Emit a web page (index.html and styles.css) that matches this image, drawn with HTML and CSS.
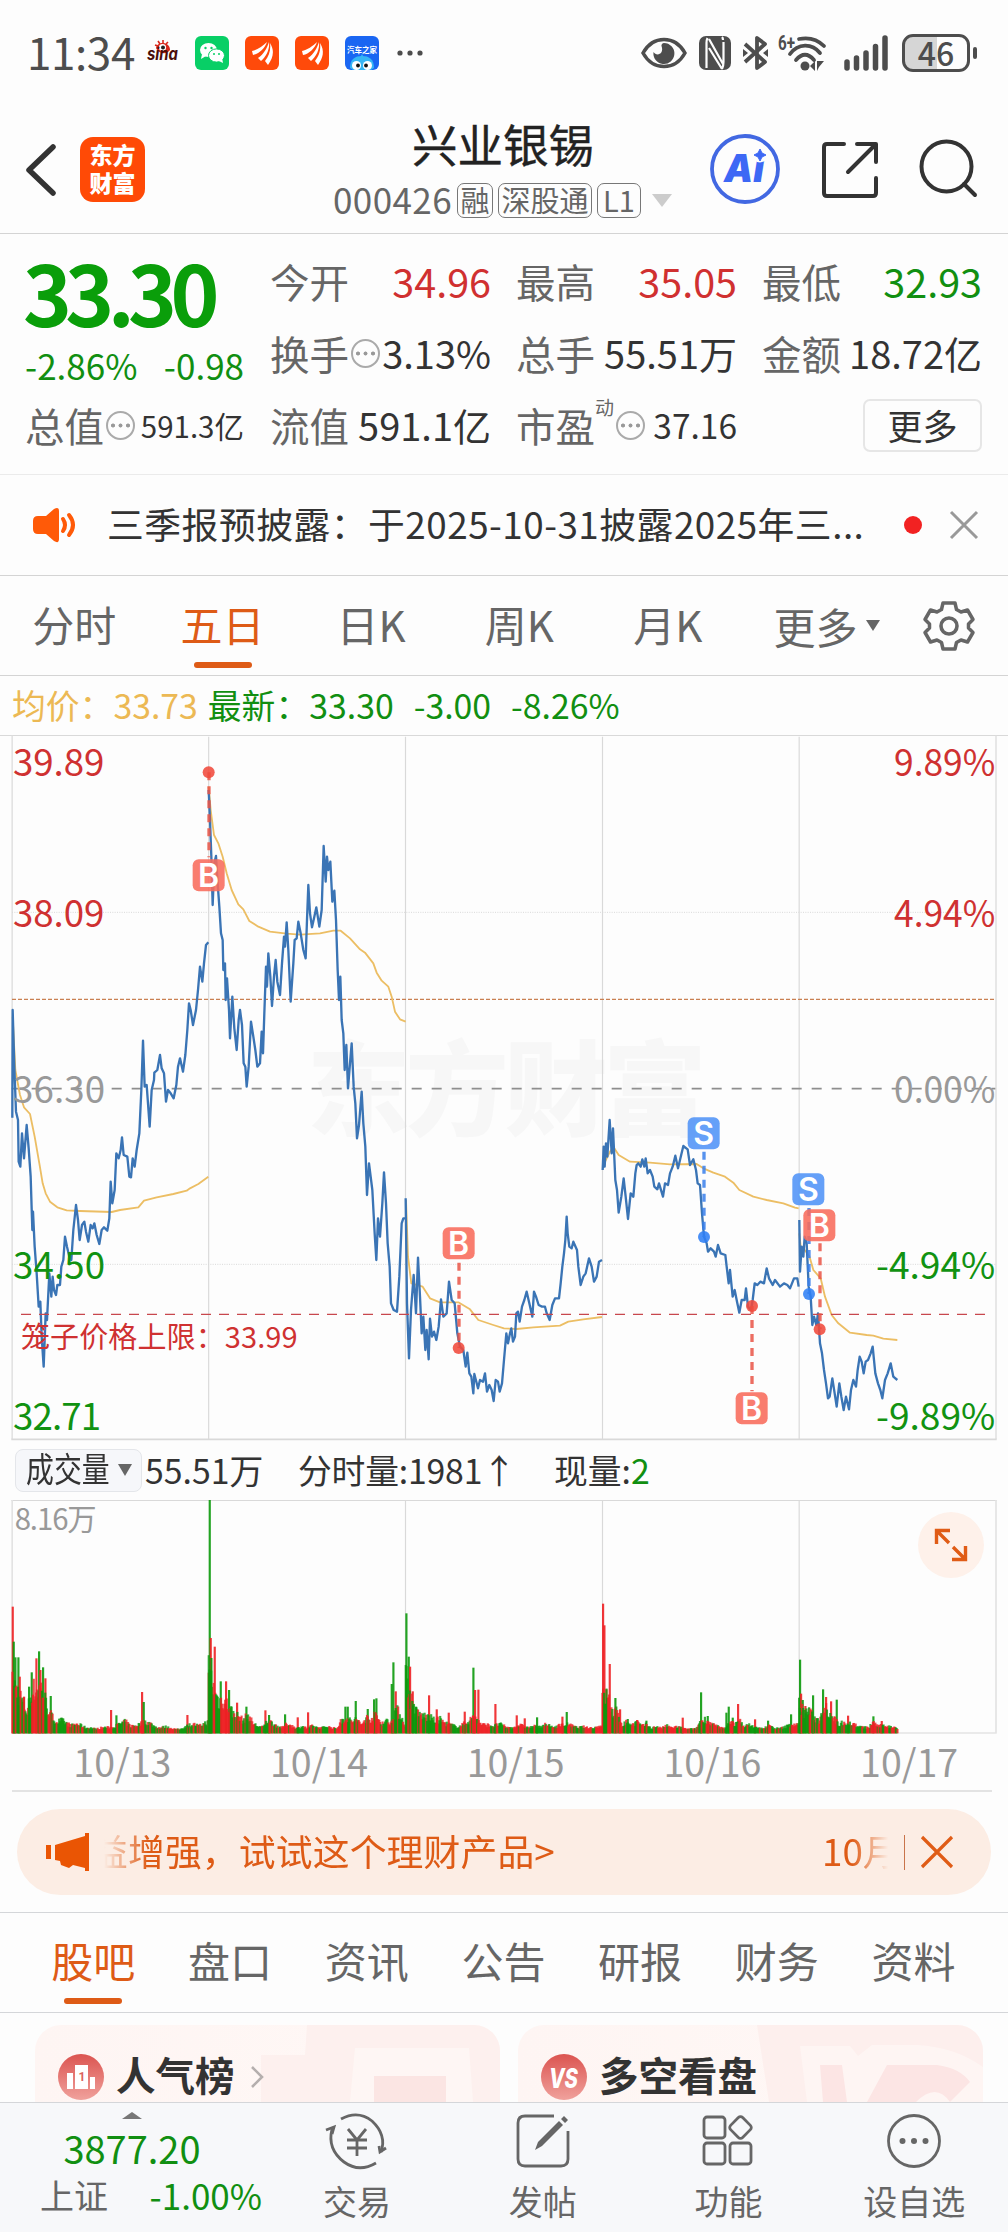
FILE: index.html
```html
<!DOCTYPE html>
<html lang="zh-CN">
<head>
<meta charset="utf-8">
<title>兴业银锡 000426</title>
<link rel="stylesheet" href="styles.css">
</head>
<body>
<div class="phone">

<header class="status">
  <span class="clock">11:34</span>
  <svg class="sina" width="32" height="26" viewBox="0 0 32 26"><path d="M9 8C10 1 23 1 23 10c-2 4-11 5-14-2z" fill="#d8281c"/><path d="M8 5l3 1M11 1l2 3M16 0v3M21 2l-2 2" stroke="#d8281c" stroke-width="1.6"/><circle cx="15.500" cy="7.500" r="3.600" fill="#fff"/><circle cx="16" cy="7.500" r="2" fill="#222"/><text x="0" y="20" class="sina-text" textLength="31" lengthAdjust="spacingAndGlyphs">sina</text></svg>
  <svg class="app" width="34" height="34" viewBox="0 0 34 34"><rect width="34" height="34" rx="6" fill="#08cf66"/><ellipse cx="13.500" cy="14" rx="8.500" ry="7" fill="#fff"/><path d="M7 18l-1 5 5-3z" fill="#fff"/><ellipse cx="21.500" cy="19.500" rx="8" ry="6.600" fill="#fff" stroke="#08cf66"/><path d="M24 25l4 2-1-5z" fill="#fff"/><g fill="#08cf66"><circle cx="10.500" cy="12" r="1.200"/><circle cx="16.500" cy="12" r="1.200"/><circle cx="19" cy="18" r="1"/><circle cx="24" cy="18" r="1"/></g></svg>
  <svg class="app" width="34" height="34" viewBox="0 0 34 34"><rect width="34" height="34" rx="6" fill="#ff4a0a"/><path d="M7 15C12 14 18 10 22 6 20 12 14 18 8 19zM13 22C19 18 22 12 24 6c1 7-3 15-8 19zM20 25c4-5 6-11 5-18 5 8 3 15-2 22z" fill="#fff"/></svg>
  <svg class="app" width="34" height="34" viewBox="0 0 34 34"><rect width="34" height="34" rx="6" fill="#ff4a0a"/><path d="M7 15C12 14 18 10 22 6 20 12 14 18 8 19zM13 22C19 18 22 12 24 6c1 7-3 15-8 19zM20 25c4-5 6-11 5-18 5 8 3 15-2 22z" fill="#fff"/></svg>
  <svg class="app" width="34" height="34" viewBox="0 0 34 34"><rect width="34" height="34" rx="6" fill="#1a66f2"/><path d="M5 32C5 23 10 20 17 20s12 3 12 12l-3 2H8z" fill="#36b6f5"/><path d="M17 18l2 4h-4z" fill="#36b6f5"/><circle cx="11.500" cy="29.500" r="4.500" fill="#fff"/><circle cx="22.500" cy="29.500" r="4.500" fill="#fff"/><circle cx="13" cy="29.500" r="1.900" fill="#111"/><circle cx="21" cy="29.500" r="1.900" fill="#111"/><text x="2" y="17" class="auto-text" textLength="30" lengthAdjust="spacingAndGlyphs">汽车之家</text></svg>
  <svg class="more-dots" width="26" height="6" viewBox="0 0 26 6" fill="#4d4d4d"><circle cx="3" cy="3" r="2.600"/><circle cx="13" cy="3" r="2.600"/><circle cx="23" cy="3" r="2.600"/></svg>
  <div class="signals">
    <svg width="46" height="32" viewBox="0 0 46 32"><path d="M2 16C12-2 34-2 44 16 34 34 12 34 2 16z" fill="none" stroke="#4d4d4d" stroke-width="3.500"/><path d="M23 6a10.500 10.500 0 1 1-10.500 9c3 5 11 2 8-6-.4-1.200 1-3 2.500-3z" fill="#4d4d4d"/></svg>
    <svg class="nfc" width="32" height="34" viewBox="0 0 32 34"><rect width="32" height="34" rx="7" fill="#4d4d4d"/><path d="M8.500 2q-1 2-1 5v25M10 3l14 25M10 12l13 21M24 4q0-2-1-3M24.500 6v20q0 4-1.500 7" stroke="#fdfdfd" stroke-width="2.200" fill="none"/></svg>
    <svg class="bt" width="26" height="36" viewBox="0 0 26 36"><path d="M2 27L22 9 14 3v30l8-6L2 9" fill="none" stroke="#4d4d4d" stroke-width="3.800" stroke-linejoin="round"/><path d="M0 14l5 4-5 4zM25 14l-5 4 5 4z" fill="#4d4d4d"/></svg>
    <svg class="wifi" width="50" height="38" viewBox="0 0 50 38"><text x="0" y="16" class="wifi-text" textLength="17" lengthAdjust="spacingAndGlyphs">6+</text><g fill="none" stroke="#4d4d4d" stroke-width="3.800" stroke-linecap="round"><path d="M21 5C31 3 40 6 46 12M12 20C20 9 34 9 42 19M18 26c6-7 12-7 18 0"/></g><circle cx="27" cy="32" r="4.500" fill="#4d4d4d"/><path d="M32 32l5-5v10zM39 37V27h7l-5 6z" fill="#4d4d4d"/></svg>
    <svg class="bars" width="44" height="36" viewBox="0 0 44 36"><path d="M3 27v6M12.500 23v10M22 18v15M31.500 11.500V33M41 3v30" stroke="#4d4d4d" stroke-width="5.500" stroke-linecap="round"/></svg>
    <span class="battery">46</span><i class="battery-cap"></i>
  </div>
</header>

<nav class="titlebar">
  <svg class="back" width="34" height="56" viewBox="0 0 34 56"><path d="M29 5L5 28l24 23" fill="none" stroke="#333" stroke-width="5.500" stroke-linecap="round" stroke-linejoin="round"/></svg>
  <div class="brand"><b>东方</b><b>财富</b></div>
  <div class="name">
    <h1>兴业银锡</h1>
    <p><span class="code">000426</span><span class="tag">融</span><span class="tag">深股通</span><span class="tag l1">L1</span><i class="tri"></i></p>
  </div>
  <svg class="ai" width="70" height="70" viewBox="0 0 70 70"><circle cx="35" cy="35" r="33" fill="none" stroke="#4268e2" stroke-width="3.800"/><text x="14" y="48" class="ai-text" textLength="40" lengthAdjust="spacingAndGlyphs">Ai</text><circle cx="50" cy="21" r="7.500" fill="#fdfdfd"/><path d="M50 15l2 4 4 2-4 2-2 4-2-4-4-2 4-2z" fill="#3d68f5" stroke="#3d68f5"/></svg>
  <svg class="share" width="58" height="58" viewBox="0 0 58 58"><g fill="none" stroke="#333" stroke-width="4" stroke-linecap="round" stroke-linejoin="round"><path d="M23 3H6Q3 3 3 6v46q0 3 3 3h46q3 0 3-3V37M36 3h19v18M54 4L27 31"/></g></svg>
  <svg class="search" width="60" height="60" viewBox="0 0 60 60"><g fill="none" stroke="#333" stroke-width="4" stroke-linecap="round"><circle cx="27.500" cy="27.500" r="25"/><path d="M45 45l11 11"/></g></svg>
</nav>

<section class="quote">
  <div class="last">
    <div class="price">33.30</div>
    <div class="chg"><span>-2.86%</span><span>-0.98</span></div>
    <div class="kv small"><span>总值</span><i class="tip"></i><b>591.3亿</b></div>
  </div>
  <div class="stats">
    <div class="kv"><span>今开</span><b class="up">34.96</b></div>
    <div class="kv"><span>最高</span><b class="up">35.05</b></div>
    <div class="kv"><span>最低</span><b class="down">32.93</b></div>
    <div class="kv mid"><span>换手</span><i class="tip"></i><b>3.13%</b></div>
    <div class="kv mid"><span>总手</span><b>55.51万</b></div>
    <div class="kv mid"><span>金额</span><b>18.72亿</b></div>
    <div class="kv mid"><span>流值</span><b>591.1亿</b></div>
    <div class="kv pe"><span>市盈</span><sup>动</sup><i class="tip"></i><b>37.16</b></div>
    <div class="kv end"><button class="more">更多</button></div>
  </div>
</section>

<section class="notice">
  <svg width="44" height="36" viewBox="0 0 44 36"><path d="M6 9h8L22 2q5-3 5 2v28q0 5-5 2l-8-7H6q-5 0-5-5v-8q0-5 5-5z" fill="#ff5a08"/><path d="M31 12q4 6 0 12M37 8q8 10 0 20" fill="none" stroke="#ff5a08" stroke-width="4" stroke-linecap="round"/></svg>
  <p>三季报预披露：于2025-10-31披露2025年三...</p>
  <i class="dot"></i>
  <svg class="close" width="30" height="30" viewBox="0 0 30 30"><path d="M2 2l26 26M28 2L2 28" stroke="#999" stroke-width="3"/></svg>
</section>

<nav class="periods">
  <a>分时</a><a class="on">五日</a><a>日K</a><a>周K</a><a>月K</a><a class="wide">更多<i></i></a>
  <svg width="50" height="50" viewBox="-25 -25 50 50"><path d="M-6-23H6L7.500-16.500 12-14 18.500-16 24-6.500 19.500-2V2L24 6.500 18.500 16 12 14 7.500 16.500 6 23H-6L-7.500 16.500-12 14-18.500 16-24 6.500-19.500 2V-2L-24-6.500-18.500-16-12-14-7.500-16.500z" fill="none" stroke="#666" stroke-width="3.500" stroke-linejoin="round"/><circle r="8" fill="none" stroke="#666" stroke-width="3.600"/></svg>
</nav>

<div class="legend"><span class="avg">均价：</span><span class="avg v1">33.73</span><span>最新：</span><span class="v2">33.30</span><span class="v3">-3.00</span><span>-8.26%</span></div>

<svg class="chart" width="1008" height="705" viewBox="0 495 3024 2115">
  <text class="mark" x="920" y="1674" textLength="1200">东方财富</text>
  <g stroke="#d9d9d9" fill="none">
    <path d="M0 496.500H3024" stroke-width="3"/>
    <path d="M626 500V2608M1216.500 500V2608M1807.500 500V2608M2397.500 500V2608" stroke-width="3.500"/>
    <path d="M36.500 497V2608M2988 497V2608" stroke="#e3e3e3" stroke-width="5"/>
    <path d="M34 2608H2990" stroke-width="5"/>
    <path d="M36 1027H2986M36 2083H2986" stroke-width="3" stroke-dasharray="3 4"/>
  </g>
  <path d="M36 1288H2986" stroke="#c98052" stroke-width="3.500" stroke-dasharray="12 6"/>
  <path d="M35 1556H2986" stroke="#8e8e8e" stroke-width="5" stroke-dasharray="30 30"/>
  <g class="avg-line">
    <polyline points="38,1340 46,1500 60,1575 72,1612 90,1632 104,1700 118,1780 128,1840 137,1870 150,1895 172,1912 200,1921 240,1923 335,1926 360,1920 415,1912 432,1892 470,1882 520,1872 560,1862 570,1855 595,1842 625,1820"/>
    <polyline points="626,650 632,720 642,795 655,820 668,860 680,910 695,960 715,1003 730,1018 748,1053 775,1070 810,1085 860,1091 900,1094 960,1090 1000,1082 1022,1082 1050,1105 1080,1138 1095,1148 1120,1180 1130,1208 1145,1232 1165,1250 1175,1280 1185,1325 1200,1348 1217,1355"/>
    <polyline points="1218,1890 1224,2060 1234,2140 1268,2150 1290,2185 1320,2197 1375,2197 1410,2218 1435,2250 1480,2265 1512,2275 1550,2277 1600,2272 1680,2267 1705,2255 1750,2248 1806,2241"/>
    <polyline points="1808,1790 1830,1745 1840,1730 1856,1755 1890,1775 1950,1778 2010,1783 2090,1782 2110,1795 2140,1808 2175,1820 2200,1838 2218,1860 2260,1880 2300,1890 2350,1900 2385,1913 2396,1915"/>
    <polyline points="2398,1990 2402,2030 2414,2040 2428,2058 2440,2100 2462,2125 2475,2180 2495,2235 2515,2260 2550,2288 2600,2295 2620,2297 2650,2306 2692,2310"/>
  </g>
  <g class="price-line">
    <polyline points="37,1643 38,1320 43,1490 48,1625 54,1650 56,1775 61,1790 66,1690 72,1765 80,1665 86,1735 92,1820 97,1980 99,1925 104,2030 110,2110 116,2210 121,2195 125,2300 131,2390 137,2230 141,2250 148,2110 154,2180 158,2120 162,2160 168,2175 172,2145 180,2145 184,2090 190,2070 195,2000 201,2030 208,2060 214,2070 220,1980 228,1905 234,1950 239,2010 246,1965 253,1955 258,1985 265,2015 272,1965 278,1975 283,1960 290,1995 298,2022 305,1980 312,1972 322,1982 328,1945 332,1835 337,1900 344,1860 349,1750 356,1765 362,1740 366,1702 371,1755 382,1760 388,1820 393,1822 398,1765 404,1790 410,1740 418,1690 424,1560 429,1412 434,1550 440,1545 449,1670 455,1560 462,1530 463,1508 472,1500 480,1455 485,1495 492,1510 498,1595 504,1560 512,1570 521,1585 529,1545 534,1490 540,1465 549,1505 556,1455 562,1380 567,1300 572,1320 579,1365 588,1320 594,1260 600,1190 607,1235 612,1180 618,1125 625,1117"/>
    <polyline points="626,660 630,750 634,860 638,1005 643,880 648,858 653,940 658,1010 663,1090 668,1110 670,1200 675,1180 677,1290 681,1225 687,1320 690,1405 697,1280 703,1375 710,1440 716,1350 720,1320 726,1365 731,1480 736,1490 740,1550 746,1490 753,1355 760,1400 766,1440 772,1490 780,1480 785,1385 789,1450 793,1330 798,1190 801,1250 805,1150 811,1220 816,1308 822,1220 827,1170 832,1235 840,1275 846,1180 852,1100 855,1130 860,1057 865,1140 872,1295 880,1180 884,1110 890,1105 895,1055 902,1090 910,1140 917,1165 921,1050 925,945 930,1030 936,1072 943,1040 949,1012 958,1070 965,1020 971,828 977,935 981,860 985,900 991,875 997,995 1003,962 1008,1050 1013,1200 1017,1290 1021,1220 1025,1350 1030,1390 1034,1500 1039,1425 1044,1555 1050,1480 1055,1420 1061,1550 1066,1600 1071,1705 1077,1665 1085,1565 1090,1660 1096,1730 1101,1875 1107,1780 1117,1860 1124,1990 1129,2070 1134,1945 1140,2000 1147,1900 1152,1807 1158,1900 1163,2020 1169,2090 1173,2200 1181,2220 1191,2225 1198,2120 1205,1960 1210,1945 1216,1945"/>
    <polyline points="1217,1885 1221,2200 1227,2365 1233,2220 1241,2115 1248,2230 1254,2063 1260,2180 1265,2290 1270,2240 1276,2340 1280,2280 1286,2368 1290,2246 1296,2300 1302,2285 1309,2310 1316,2270 1323,2188 1330,2240 1340,2230 1347,2135 1355,2190 1364,2200 1372,2290 1380,2330 1390,2340 1397,2390 1402,2348 1408,2410 1414,2420 1420,2470 1423,2412 1434,2455 1440,2430 1449,2435 1455,2410 1461,2465 1468,2445 1475,2460 1481,2493 1487,2430 1494,2435 1499,2465 1506,2440 1512,2370 1519,2290 1524,2320 1530,2290 1534,2275 1539,2315 1545,2300 1549,2230 1554,2225 1559,2255 1566,2210 1573,2190 1580,2165 1588,2200 1597,2240 1602,2165 1608,2180 1616,2205 1626,2210 1635,2210 1640,2230 1649,2250 1657,2205 1665,2185 1677,2185 1682,2140 1687,2090 1692,2050 1696,2010 1700,1940 1703,1990 1708,2030 1715,2035 1720,2015 1731,2040 1735,2090 1742,2145 1750,2120 1757,2110 1767,2065 1775,2090 1782,2135 1790,2120 1797,2075 1806,2070"/>
    <polyline points="1808,1800 1811,1730 1814,1790 1818,1720 1822,1760 1829,1650 1835,1750 1839,1675 1846,1830 1851,1860 1856,1928 1864,1880 1871,1825 1877,1880 1884,1947 1892,1870 1900,1880 1906,1810 1910,1785 1915,1780 1922,1790 1927,1768 1933,1790 1937,1765 1943,1810 1950,1800 1958,1820 1963,1850 1972,1858 1977,1840 1989,1880 1995,1840 2004,1845 2010,1810 2018,1790 2026,1757 2034,1795 2040,1770 2050,1728 2063,1738 2070,1785 2080,1768 2088,1800 2093,1840 2100,1845 2106,1930 2112,2000 2120,2020 2124,2045 2132,2035 2142,2045 2147,2060 2154,2025 2162,2050 2176,2055 2180,2090 2186,2140 2190,2100 2198,2180 2204,2160 2212,2200 2218,2228 2225,2190 2234,2190 2238,2155 2244,2210 2253,2220 2258,2190 2264,2140 2272,2145 2281,2135 2292,2140 2300,2095 2307,2125 2318,2145 2325,2130 2340,2150 2352,2140 2362,2145 2370,2155 2382,2125 2392,2125 2396,2150"/>
    <polyline points="2398,1950 2400,2105 2405,2030 2410,2060 2414,2000 2420,2020 2426,2150 2432,2180 2437,2265 2442,2240 2449,2265 2454,2230 2460,2320 2466,2350 2472,2400 2478,2440 2484,2485 2489,2480 2497,2425 2504,2470 2510,2510 2518,2440 2524,2480 2531,2520 2538,2480 2547,2518 2553,2460 2560,2430 2568,2450 2573,2400 2579,2360 2585,2375 2591,2410 2597,2375 2604,2370 2612,2350 2618,2330 2626,2410 2634,2440 2641,2460 2647,2485 2655,2430 2663,2410 2672,2380 2680,2420 2692,2430"/>
  </g>
  <path d="M63 2233H2956" stroke="#c8474d" stroke-width="3.500" stroke-dasharray="30 24"/>
  <g class="axis">
    <g class="c-up"><text x="39" y="618" textLength="274">39.89</text><text x="39" y="1071" textLength="274">38.09</text></g>
    <text class="c-flat" x="39" y="1598" textLength="276">36.30</text>
    <g class="c-down"><text x="39" y="2126" textLength="276">34.50</text><text x="39" y="2580" textLength="264">32.71</text></g>
    <g class="c-up"><text x="2682" y="618" textLength="304" lengthAdjust="spacingAndGlyphs">9.89%</text><text x="2682" y="1071" textLength="304" lengthAdjust="spacingAndGlyphs">4.94%</text></g>
    <text class="c-flat" x="2682" y="1598" textLength="304" lengthAdjust="spacingAndGlyphs">0.00%</text>
    <g class="c-down"><text x="2628" y="2126" textLength="358" lengthAdjust="spacingAndGlyphs">-4.94%</text><text x="2628" y="2580" textLength="358" lengthAdjust="spacingAndGlyphs">-9.89%</text></g>
    <text class="c-up cage" x="63" y="2333" textLength="830">笼子价格上限：33.99</text>
  </g>
  <g class="trade buy">
    <path d="M627 607V862"/><circle cx="626" cy="607" r="18"/><rect x="578" y="868" width="96" height="96" rx="18"/><text x="626" y="950">B</text>
    <path d="M1377 2078V2334"/><circle cx="1376" cy="2334" r="18"/><rect x="1328" y="1972" width="96" height="96" rx="18"/><text x="1376" y="2054">B</text>
    <path d="M2256 2208V2464"/><circle cx="2256" cy="2208" r="18"/><rect x="2207" y="2467" width="96" height="96" rx="18"/><text x="2255" y="2549">B</text>
  </g>
  <g class="trade sell">
    <path d="M2112 1745V2001"/><circle cx="2112" cy="2001" r="18"/><rect x="2063" y="1642" width="96" height="96" rx="18"/><text x="2111" y="1724">S</text>
    <path d="M2427 1914V2172"/><circle cx="2427" cy="2172" r="18"/><rect x="2377" y="1810" width="96" height="96" rx="18"/><text x="2425" y="1892">S</text>
  </g>
  <g class="trade buy">
    <path d="M2460 2020V2278"/><circle cx="2459" cy="2278" r="18"/><rect x="2410" y="1918" width="96" height="96" rx="18"/><text x="2458" y="2000">B</text>
  </g>
</svg>

<div class="volbar"><span class="pick"><em>成交量</em><i></i></span><span class="w1">55.51万</span><span class="w2">分时量:1981↑</span><span>现量:<b>2</b></span></div>

<div class="volume">
  <svg width="1008" height="234" viewBox="0 180 3024 702">
    <g stroke="#d9d9d9" fill="none"><path d="M34 181.500H2990" stroke-width="3"/><path d="M1216.500 180V880M1807.500 180V880M2397.500 180V880" stroke-width="3.500"/><path d="M36.500 180V880M2988 180V880M34 879H2990" stroke="#e3e3e3" stroke-width="5"/></g>
    <g id="bars"></g>
    <text class="vmax" x="44" y="270" textLength="246">8.16万</text>
  </svg>
  <button class="expand"><svg width="34" height="34" viewBox="0 0 34 34"><path d="M2.500 16V2.500H16M3 3l12 12M31.500 18v13.500H18M31 31L19 19" fill="none" stroke="#e05c16" stroke-width="3.400"/></svg></button>
</div>
<div class="dates"><span>10/13</span><span>10/14</span><span>10/15</span><span>10/16</span><span>10/17</span></div>

<div class="promo">
  <svg width="44" height="38" viewBox="0 0 44 38"><path d="M0 12h5v14H0zM9 12L39 3V0h4v38h-4v-3l-12-3-4 3-8-3-1-4-5-1z" fill="#ea5504"/></svg>
  <p class="from">益增强，试试这个理财产品&gt;</p>
  <p class="to">10月</p>
  <i></i>
  <svg width="32" height="32" viewBox="0 0 32 32"><path d="M1 1l30 30M31 1L1 31" stroke="#e05c16" stroke-width="3.200"/></svg>
</div>

<nav class="sections"><a class="on">股吧</a><a>盘口</a><a>资讯</a><a>公告</a><a>研报</a><a>财务</a><a>资料</a></nav>

<section class="cards">
  <div class="card">
    <svg class="art" width="205" height="77" viewBox="0 0 205 77"><path d="M12 0H205V77H-34V30H10z" fill="#fdf0ee"/><path d="M60 23H174L178 77H55z" fill="#fef6f4"/><path d="M79 51h72v26H79z" fill="#fbe5e3"/></svg>
    <svg width="46" height="46" viewBox="0 0 46 46"><defs><linearGradient id="badge" x2="0" y2="1"><stop stop-color="#db5450"/><stop offset="1" stop-color="#f0a19c"/></linearGradient></defs><circle cx="23" cy="23" r="23" fill="url(#badge)"/><path d="M9 19h6v16H9zM17 11h13v24H17zM32 23h5v12h-5z" fill="#fff"/><text x="20.500" y="27" class="rank">1</text></svg>
    <b>人气榜</b>
    <svg class="go" width="14" height="24" viewBox="0 0 14 24"><path d="M2 2l10 10L2 22" fill="none" stroke="#b5afae" stroke-width="2.600"/></svg>
  </div>
  <div class="card">
    <svg class="art" width="226" height="77" viewBox="0 0 226 77"><path d="M0 0H226V77H12z" fill="#fdefed"/><path d="M43 21h50l8 10 14-11h45q38 2 66 22v35H50z" fill="#fef5f3"/><path d="M63 40h22l5 37H66zM110 77l20-37h50q23 3 33 17l-20 20q-14-20-34 0z" fill="#fce5e4"/></svg>
    <svg width="46" height="46" viewBox="0 0 46 46"><circle cx="23" cy="23" r="23" fill="url(#badge)"/><text x="8" y="34" class="vs" textLength="29" lengthAdjust="spacingAndGlyphs">VS</text></svg>
    <b>多空看盘</b>
  </div>
</section>

<footer class="dock">
  <div class="index"><i></i><strong>3877.20</strong><p><span>上证</span><b>-1.00%</b></p></div>
  <a><svg width="64" height="58" viewBox="0 0 64 58"><g fill="none" stroke="#666" stroke-width="2.800"><path d="M16 6Q33-3 47 8q15 14 9 31M51 50Q34 60 19 49 2 36 7 16"/><path d="M1 17l8-3-2 7M61 35l-6 4-1-6"/><path d="M23 16l9 11 9-11M32 27v16M22 27h20M22 35h20"/></g></svg><span>交易</span></a>
  <a><svg width="54" height="58" viewBox="0 0 54 58"><path d="M38 3H9Q2 3 2 10v36q0 7 7 7h36q7 0 7-7V18" fill="none" stroke="#666" stroke-width="2.800"/><path d="M19 37l3-8L43 8l4 4-21 21zM45 6l3-3 4 4-3 3z" fill="#666"/></svg><span>发帖</span></a>
  <a><svg width="52" height="58" viewBox="0 0 52 58"><g fill="none" stroke="#666" stroke-width="2.800"><rect x="2" y="4" width="21" height="21" rx="3"/><rect x="2" y="30" width="21" height="21" rx="3"/><rect x="28" y="30" width="21" height="21" rx="3"/><rect x="30" y="6" width="17" height="17" rx="3" transform="rotate(45 38.500 14.500)"/></g></svg><span>功能</span></a>
  <a><svg width="56" height="58" viewBox="0 0 56 58"><circle cx="28" cy="28" r="25.500" fill="none" stroke="#666" stroke-width="2.800"/><g fill="#666"><circle cx="16.500" cy="28" r="3"/><circle cx="28" cy="28" r="3"/><circle cx="39.500" cy="28" r="3"/></g></svg><span>设自选</span></a>
</footer>
</div>
<script src="volume.js"></script>
</body>
</html>
```
FILE: styles.css
```css
* { box-sizing: border-box; margin: 0; padding: 0; }
body { background: #fff; color: #333; font-family: "Noto Sans CJK SC", "Noto Sans", sans-serif; width: 1008px; }
i, em { font-style: normal; }
svg { display: block; flex: none; overflow: visible; }
.phone { width: 1008px; height: 2232px; overflow: hidden; background: #fdfdfd; display: flex; flex-direction: column; }
.phone > * { flex: none; }
button { font: inherit; background: none; border: 0; }

.status { height: 106px; padding: 0 31px 0 27px; display: flex; align-items: center; color: #4d4d4d; }
.clock { width: 120px; font-size: 44px; line-height: 60px; letter-spacing: -.4px; margin-top: -4px; }
.sina { margin-right: 16px; }
.sina-text { font: italic 700 17px "Inter", sans-serif; fill: #4a0e0a; }
.app { margin-right: 16px; }
.auto-text { font: 700 8px "Noto Sans CJK SC", sans-serif; fill: #fff; }
.more-dots { margin-left: 2px; }
.signals { margin-left: auto; display: flex; align-items: center; }
.nfc { margin-left: 12px; }
.bt { margin-left: 12px; }
.wifi { margin-left: 9px; }
.wifi-text { font: 700 20px "Roboto", sans-serif; fill: #4d4d4d; }
.bars { margin-left: 16px; }
.battery { width: 68px; height: 38px; margin-left: 14px; border: 3px solid #4d4d4d; border-radius: 11px; background: linear-gradient(90deg, #d6d6d6 32px, #fdfdfd 32px); font-size: 32px; line-height: 30px; text-align: center; font-weight: 500; }
.battery-cap { width: 4px; height: 12px; margin-left: 3px; border-radius: 2px; background: #4d4d4d; }

.titlebar { height: 128px; border-bottom: 1px solid #d4d4d4; display: flex; align-items: flex-start; }
.back { margin: 36px 0 0 24px; }
.brand { width: 65px; height: 65px; margin: 31px 0 0 22px; border-radius: 13px; background: #ff4a06; color: #fff; font-size: 23px; line-height: 28px; text-align: center; padding-top: 3px; font-weight: 900; }
.brand b { display: block; }
.name { width: 412px; margin-left: 152px; text-align: center; }
.name h1 { font-size: 45.500px; line-height: 60px; font-weight: 400; margin-top: 7px; color: #222; -webkit-text-stroke: .4px #222; }
.name p { display: flex; align-items: center; height: 44px; color: #666; padding-left: 36px; margin-top: 5px; }
.code { font-size: 35px; line-height: 40px; letter-spacing: .4px; margin-right: 5px; margin-top: -2px; }
.tag { height: 35px; border: 1.500px solid #777; border-radius: 7px; font-size: 29px; line-height: 30px; padding: 0 2.500px; margin-right: 5px; }
.tag.l1 { padding: 0 5px; }
.tri { border: 10px solid transparent; border-top: 13px solid #ccc; border-bottom: 0; margin-left: 6px; }
.ai { margin: 28px 0 0 1px; }
.ai-text { font: italic 900 38px "Inter", sans-serif; fill: #3d68f5; }
.share { margin: 35px 0 0 41px; }
.search { margin: 33px 0 0 40px; }

.quote { height: 241px; border-bottom: 1px solid #ebebeb; display: flex; padding: 11px 26px 0 25px; }
.last { width: 219px; }
.price { color: #0a9e0a; font-size: 83px; font-weight: 700; line-height: 96px; height: 99px; letter-spacing: -6.600px; margin-left: -2px; margin-top: -2px; }
.chg { display: flex; justify-content: space-between; height: 47px; line-height: 46px; font-size: 35px; color: #118f11; }
.stats { margin-left: 26px; display: grid; grid-template-columns: 221px 221px 220px; column-gap: 25px; grid-auto-rows: 72px; }
.kv { height: 72px; display: flex; align-items: center; color: #666; font-size: 39.500px; line-height: 60px; white-space: nowrap; }
.kv b { margin-left: auto; font-weight: 400; color: #333; font-size: 39.500px; }
.mid b { font-size: 38px; }
.small b { font-size: 29.500px; }
.pe b { font-size: 33.500px; }
.pe sup { font-size: 19px; line-height: 20px; align-self: flex-start; margin-top: 8px; width: 19px; }
.kv .up { color: #d03030; }
.kv .down { color: #118f11; }
.tip { width: 29px; height: 29px; border: 2px solid #aaa; border-radius: 50%; margin-left: 2px; background: radial-gradient(circle at 5px 12.500px, #999 1.700px, transparent 2.300px), radial-gradient(circle at 12.500px 12.500px, #999 1.700px, transparent 2.300px), radial-gradient(circle at 20px 12.500px, #999 1.700px, transparent 2.300px); }
.end { justify-content: flex-end; }
.more { width: 119px; height: 53px; border: 2px solid #e6e6e6; border-radius: 7px; font-size: 35px; line-height: 44px; color: #333; }

.notice { height: 101px; border-bottom: 1px solid #d4d4d4; display: flex; align-items: center; padding: 0 29px 0 32px; }
.notice p { width: 772px; margin-left: 31px; font-size: 36.800px; line-height: 60px; letter-spacing: .5px; margin-top: -4px; white-space: nowrap; }
.dot { width: 18px; height: 18px; border-radius: 50%; background: #f22222; margin-left: 25px; }
.close { margin-left: auto; }

.periods { height: 100px; border-bottom: 1px solid #d4d4d4; display: flex; align-items: center; color: #666; font-size: 42px; }
.periods a { width: 148.400px; height: 100px; line-height: 96px; text-align: center; position: relative; }
.periods .on, .sections .on { color: #de5b16; }
.on::after { content: ""; position: absolute; left: 50%; margin-left: -29px; bottom: 8px; width: 58px; height: 6px; border-radius: 3px; background: #de5b16; }
.periods .wide { width: 170px; display: flex; align-items: center; justify-content: center; }
.wide i { border: 7px solid transparent; border-top: 11px solid #666; border-bottom: 0; margin-left: 9px; }
.periods svg { margin-left: 12px; }

.legend { height: 59px; display: flex; padding-left: 12px; font-size: 33.800px; line-height: 57px; color: #118f11; white-space: nowrap; }
.legend .avg { color: #ecb954; }
.legend .v1 { margin-right: 10px; }
.legend .v2 { margin-right: 20px; }
.legend .v3 { margin-right: 20px; }

.mark { font-size: 310px; font-weight: 900; fill: #f7f7f7; }
.avg-line { fill: none; stroke: #ecbe64; stroke-width: 5.500; stroke-linejoin: round; }
.price-line { fill: none; stroke: #3a74b5; stroke-width: 7; stroke-linejoin: round; }
.axis { font-size: 110px; }
.axis .cage { font-size: 87px; }
.c-up { fill: #cf3131; }
.c-down { fill: #119211; }
.c-flat { fill: #999; }
.trade path { stroke-width: 10; stroke-dasharray: 24 18; opacity: .85; }
.trade rect { opacity: .88; }
.trade circle { opacity: .88; }
.trade text { font: 600 96px "Inter", sans-serif; fill: #fff; text-anchor: middle; }
.buy rect { fill: #f86b5b; }
.buy path { stroke: #ea5547; }
.buy circle { fill: #f04a3c; }
.sell rect { fill: #5093f7; }
.sell path { stroke: #3a80ec; }
.sell circle { fill: #2f80f5; }

.volbar { height: 60px; display: flex; align-items: center; padding-left: 15px; font-size: 33.800px; line-height: 54px; color: #333; white-space: nowrap; }
.volbar > span:not(.pick) { margin-top: -1px; }
.pick { width: 127px; height: 43px; border: 1px solid #e4e6ea; border-radius: 8px; background: #f6f7fa; display: flex; align-items: center; padding-left: 10px; margin-right: 3px; }
.pick em { font-size: 34px; width: 83px; transform: scaleX(.82); transform-origin: 0 50%; line-height: 40px; margin-top: -4px; }
.pick i { border: 7px solid transparent; border-top: 12px solid #666; border-bottom: 0; margin-left: 9px; }
.w1 { width: 153px; }
.w2 { width: 256px; letter-spacing: -.2px; }
.volbar b { font-weight: 400; color: #118f11; }

.volume { height: 234px; position: relative; }
.vmax { font-size: 88px; fill: #999; }
.expand { position: absolute; left: 918px; top: 12px; width: 66px; height: 66px; border-radius: 50%; background: #fef1ea; padding: 16px; }
.dates { height: 58px; margin: 0 16px 0 12px; padding-left: 12px; border-bottom: 2px solid #e3e3e3; display: flex; color: #999; font-size: 37.500px; line-height: 54px; }
.dates span { width: 196.700px; flex: none; text-align: center; }

.promo { height: 86px; margin: 17px 17px 0; border-radius: 43px; background: #fcede4; display: flex; align-items: center; padding: 0 38px 0 29px; color: #de5b16; font-size: 36.800px; line-height: 60px; white-space: nowrap; }
.promo p { margin-top: -4px; }
.promo .from { width: 470px; margin-left: 14px; text-indent: -13px; overflow: hidden; letter-spacing: .15px; -webkit-mask-image: linear-gradient(90deg, transparent, #000 44px); mask-image: linear-gradient(90deg, transparent, #000 44px); }
.promo .to { width: 68px; margin-left: auto; overflow: hidden; -webkit-mask-image: linear-gradient(90deg, #000 30px, transparent 66px); mask-image: linear-gradient(90deg, #000 30px, transparent 66px); }
.promo i { width: 1px; height: 35px; background: #c9744a; margin: 0 16px 0 14px; }

.sections { height: 101px; margin-top: 17px; padding: 0 25px; border-top: 1px solid #d4d6d9; border-bottom: 1px solid #d4d6d9; display: flex; color: #666; font-size: 42px; line-height: 94px; }
.sections a { width: 136.700px; text-align: center; position: relative; }

.cards { height: 89px; padding: 12px 25px 0 35px; display: flex; gap: 18px; overflow: hidden; }
.card { width: 465px; height: 90px; border-radius: 26px 26px 0 0; background: linear-gradient(90deg, #fef5f3, #fff8f6); display: flex; align-items: flex-start; padding: 29px 0 0 23px; position: relative; overflow: hidden; }
.card b { position: relative; font-size: 39.500px; line-height: 46px; margin: -3px 0 0 12px; }
.card > svg:not(.art) { position: relative; }
.art { position: absolute; right: 0; top: 0; }
.go { margin: 11px 0 0 15px; }
.rank { font: 700 12px "Roboto", sans-serif; fill: #dc625c; }
.vs { font: italic 800 27px "Inter", sans-serif; fill: #fff; }

.dock { height: 130px; border-top: 1px solid #d4d6d9; background: #f7f8fa; display: flex; color: #666; }
.index { width: 264px; display: flex; flex-direction: column; align-items: center; }
.index i { border: 10px solid transparent; border-bottom: 7px solid #777; border-top: 0; margin: 9px 0 0; }
.index strong { font-size: 38px; line-height: 46px; font-weight: 400; color: #118f11; margin-top: 6px; }
.index p { display: flex; justify-content: space-between; width: 222px; margin-left: 38px; font-size: 34px; line-height: 48px; }
.index p b { font-weight: 400; color: #118f11; font-size: 35px; }
.dock a { width: 185.800px; display: flex; flex-direction: column; align-items: center; font-size: 34px; line-height: 50px; padding-top: 10px; }
.dock a span { margin-top: 5px; }
```
FILE: volume.js
```js
// Minute volume of the five sessions: for each session a start x, the bar count,
// a coarse height profile and the spikes [x, height, colour].
const BASE = 880;
const RED = '#ee2024';
const GREEN = '#0b990b';
const sessions = [
  { x: 37, n: 240,
    profile: [170, 150, 110, 70, 150, 150, 160, 90, 55, 35, 40, 30, 22, 28, 22, 14, 14, 10, 14, 16, 14, 20, 30, 36, 20, 22, 28, 36, 30, 18, 14, 18, 14, 10, 8, 18, 24, 26, 20, 30, 35],
    spikes: [[38, 380, RED], [41, 275, GREEN], [46, 228, GREEN], [55, 228, GREEN], [59, 170, RED], [72, 110, RED], [87, 140, GREEN], [95, 183, GREEN], [109, 225, RED], [117, 246, GREEN], [121, 190, RED], [129, 198, GREEN], [136, 165, RED], [152, 112, GREEN], [333, 70, RED], [349, 54, GREEN], [426, 124, RED], [431, 94, GREEN], [562, 55, RED]] },
  { x: 626, n: 240,
    profile: [230, 150, 110, 115, 90, 65, 55, 40, 60, 30, 20, 16, 40, 30, 20, 14, 30, 20, 12, 20, 12, 20, 16, 14, 20, 14, 12, 40, 50, 36, 45, 24, 50, 45, 60, 30, 40, 30, 80, 60, 20],
    spikes: [[626, 182, RED], [629, 700, GREEN], [632, 286, RED], [634, 226, GREEN], [644, 260, RED], [662, 156, GREEN], [678, 156, RED], [687, 130, GREEN], [711, 92, RED], [739, 80, GREEN], [796, 69, RED], [807, 55, GREEN], [855, 57, GREEN], [893, 48, RED], [924, 63, RED], [1036, 80, GREEN], [1043, 80, GREEN], [1067, 97, GREEN], [1103, 73, GREEN], [1122, 102, GREEN], [1129, 105, GREEN], [1175, 148, GREEN], [1180, 213, GREEN], [1187, 126, RED]] },
  { x: 1217, n: 240,
    profile: [210, 120, 70, 60, 55, 50, 38, 45, 30, 26, 20, 20, 30, 40, 60, 30, 24, 24, 20, 28, 20, 14, 16, 24, 20, 14, 20, 16, 26, 22, 16, 22, 24, 26, 20, 14, 18, 14, 14, 18, 26],
    spikes: [[1219, 360, GREEN], [1226, 230, GREEN], [1230, 200, RED], [1238, 126, RED], [1248, 80, GREEN], [1287, 114, RED], [1310, 72, RED], [1346, 62, RED], [1394, 65, RED], [1420, 197, GREEN], [1425, 130, RED], [1435, 131, RED], [1486, 88, RED], [1550, 54, RED], [1574, 45, RED], [1611, 48, GREEN], [1687, 50, RED], [1700, 64, GREEN]] },
  { x: 1807, n: 240,
    profile: [120, 130, 70, 70, 24, 36, 24, 36, 20, 26, 12, 20, 12, 22, 14, 18, 14, 10, 10, 10, 40, 44, 30, 22, 14, 12, 40, 26, 36, 20, 24, 16, 12, 14, 22, 12, 12, 16, 24, 26, 24],
    spikes: [[1809, 389, RED], [1813, 324, RED], [1819, 132, RED], [1829, 208, RED], [1846, 106, GREEN], [1860, 72, RED], [1883, 43, GREEN], [1911, 40, RED], [1939, 38, GREEN], [2048, 47, RED], [2103, 123, GREEN], [2123, 52, GREEN], [2179, 62, GREEN], [2186, 80, GREEN], [2198, 47, GREEN], [2214, 88, RED], [2265, 42, RED], [2304, 38, GREEN], [2373, 57, GREEN]] },
  { x: 2397, n: 121,
    profile: [100, 70, 70, 50, 40, 100, 70, 50, 25, 35, 30, 28, 18, 16, 14, 35, 18, 25, 18, 18, 12],
    spikes: [[2400, 221, GREEN], [2403, 119, RED], [2408, 100, GREEN], [2416, 82, RED], [2427, 78, GREEN], [2439, 114, GREEN], [2469, 132, GREEN], [2478, 109, RED], [2493, 96, RED], [2510, 101, GREEN], [2544, 53, RED], [2620, 51, GREEN], [2645, 37, RED]] }
];

let seed = 7;
const rand = () => (seed = (seed * 16807) % 2147483647) / 2147483647;
const group = document.getElementById('bars');
const bar = (x, h, fill, opacity) => {
  const r = document.createElementNS('http://www.w3.org/2000/svg', 'rect');
  r.setAttribute('x', x - 3);
  r.setAttribute('y', BASE - h);
  r.setAttribute('width', 6.5);
  r.setAttribute('height', h);
  r.setAttribute('fill', fill);
  r.setAttribute('opacity', opacity);
  group.appendChild(r);
};
for (const s of sessions) {
  for (const [x, h, fill] of s.spikes) bar(x, h, fill, 0.9);
  let fill = RED;
  for (let i = 0; i < s.n; i++) {
    const p = (i / s.n) * (s.profile.length - 1);
    const k = Math.floor(p);
    const level = s.profile[k] + (s.profile[k + 1] - s.profile[k]) * (p - k);
    if (rand() > 0.7) fill = fill === RED ? GREEN : RED;
    bar(s.x + i * 2.46, 5 + level * (0.55 + 0.55 * rand()), fill, 0.8);
  }
}
```
